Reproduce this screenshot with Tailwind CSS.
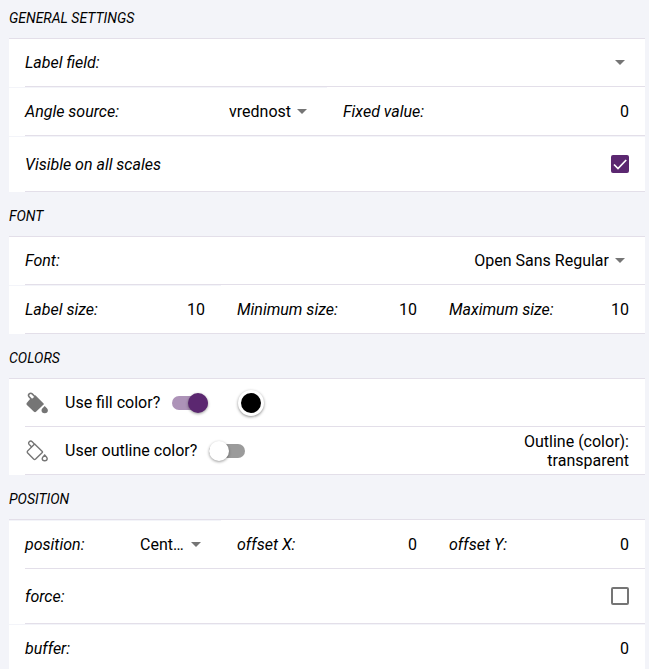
<!DOCTYPE html>
<html lang="en">
<head>
<meta charset="utf-8">
<meta name="viewport" content="width=device-width, initial-scale=1">
<title>Label settings</title>
<script src="https://cdn.jsdelivr.net/npm/@tailwindcss/browser@4"></script>
</head>
<body class="bg-[#f3f4f9] font-[Roboto,sans-serif] text-base leading-5 text-black">
<main class="flex flex-col gap-1.5 pl-[9px] pr-1">

  <section>
    <h2 class="pt-2 pb-2.5 text-sm leading-5 italic uppercase">General settings</h2>
    <div class="border-t border-[#e3dfe9] bg-white">
      <div class="flex h-12 pl-4">
        <div class="flex flex-1 items-center justify-between border-b border-[#e3dfe9] pr-4">
          <label for="field" class="italic">Label field:</label>
          <span class="flex items-center">
            <select id="field" class="w-40 appearance-none pr-5 text-right outline-none"><option></option></select>
            <svg class="pointer-events-none -ml-3.5 mr-1 h-[5px] w-2.5 fill-[#757575]" viewBox="0 0 10 5"><path d="M0 0h10L5 5z"/></svg>
          </span>
        </div>
      </div>
      <div class="grid h-[49px] grid-cols-2">
        <div class="flex border-t border-[#f3f4f9] pl-4">
          <div class="flex flex-1 items-center justify-between border-b border-[#e3dfe9] pr-4">
            <label for="angle" class="italic">Angle source:</label>
            <span class="flex items-center">
              <select id="angle" class="appearance-none pr-5 text-right outline-none"><option>vrednost</option></select>
              <svg class="pointer-events-none -ml-3.5 mr-1 h-[5px] w-2.5 fill-[#757575]" viewBox="0 0 10 5"><path d="M0 0h10L5 5z"/></svg>
            </span>
          </div>
        </div>
        <div class="flex items-center border-b border-[#e3dfe9] px-4 pt-px">
          <label for="fixed" class="shrink-0 italic">Fixed value:</label>
          <input id="fixed" inputmode="numeric" value="0" class="w-0 flex-1 text-right outline-none">
        </div>
      </div>
      <div class="flex h-14 border-t border-[#f3f4f9] pl-4">
        <div class="flex flex-1 items-center justify-between border-b border-[#e3dfe9] pr-4">
          <label for="visible" class="pt-px italic">Visible on all scales</label>
          <span class="grid size-[18px]">
            <input id="visible" type="checkbox" checked class="peer col-start-1 row-start-1 size-[18px] appearance-none rounded-xs border-2 border-[#757575] checked:border-[#5b2770] checked:bg-[#5b2770]">
            <svg class="pointer-events-none invisible col-start-1 row-start-1 size-[18px] peer-checked:visible" viewBox="0 0 18 18" fill="none" stroke="#fff" stroke-width="1.700"><path d="M3 9.500l4 4L15.200 5"/></svg>
          </span>
        </div>
      </div>
    </div>
  </section>

  <section>
    <h2 class="pt-2 pb-2.5 text-sm leading-5 italic uppercase">Font</h2>
    <div class="border-t border-[#e3dfe9] bg-white">
      <div class="flex h-12 pl-4">
        <div class="flex flex-1 items-center justify-between border-b border-[#e3dfe9] pr-4">
          <label for="font" class="italic">Font:</label>
          <span class="flex items-center">
            <select id="font" class="appearance-none pr-5 text-right outline-none"><option>Open Sans Regular</option></select>
            <svg class="pointer-events-none -ml-3.5 mr-1 h-[5px] w-2.5 fill-[#757575]" viewBox="0 0 10 5"><path d="M0 0h10L5 5z"/></svg>
          </span>
        </div>
      </div>
      <div class="grid h-[49px] grid-cols-3">
        <div class="flex border-t border-[#f3f4f9] pl-4">
          <div class="flex flex-1 items-center border-b border-[#e3dfe9] pr-4">
            <label for="size" class="shrink-0 italic">Label size:</label>
            <input id="size" inputmode="numeric" value="10" class="w-0 flex-1 text-right outline-none">
          </div>
        </div>
        <div class="flex items-center border-b border-[#e3dfe9] px-4 pt-px">
          <label for="min" class="shrink-0 italic">Minimum size:</label>
          <input id="min" inputmode="numeric" value="10" class="w-0 flex-1 text-right outline-none">
        </div>
        <div class="flex items-center border-b border-[#e3dfe9] px-4 pt-px">
          <label for="max" class="shrink-0 italic">Maximum size:</label>
          <input id="max" inputmode="numeric" value="10" class="w-0 flex-1 text-right outline-none">
        </div>
      </div>
    </div>
  </section>

  <section>
    <h2 class="pt-2 pb-2.5 text-sm leading-5 italic uppercase">Colors</h2>
    <div class="border-t border-[#e3dfe9] bg-white">
      <div class="flex h-12 pl-4">
        <div class="flex flex-1 items-center border-b border-[#e3dfe9] pr-4">
          <svg class="mr-4 size-6" viewBox="0 0 24 24" fill="#757575">
            <path d="M10.400 4.300L18.600 12.400Q19.200 13 18.600 13.600L11 20.800Q10 21.700 9 20.800L1.900 14Q1 13 1.700 11.900L5.500 7.500z"/>
            <path d="M7 8.700L4.200 5.900A2 2 0 0 1 7.200 2.900L10.200 6z" fill="#fff" stroke="#757575" stroke-width="1.500"/>
            <path d="M19.700 15C21.400 16.700 22.900 18 22.900 19.300A3.200 2.900 0 0 1 16.500 19.300C16.500 18 18 16.700 19.700 15z"/>
          </svg>
          <label for="fill">Use fill color?</label>
          <span class="ml-3 grid w-9 items-center">
            <input id="fill" type="checkbox" role="switch" checked class="peer col-start-1 row-start-1 h-3.5 w-9 appearance-none rounded-full bg-[#9b9b9b] checked:bg-[#ad93b8]">
            <span class="pointer-events-none col-start-1 row-start-1 size-5 rounded-full bg-white shadow-[0_1px_3px_rgba(0,0,0,0.4)] peer-checked:justify-self-end peer-checked:bg-[#5b2770]"></span>
          </span>
          <button type="button" aria-label="Fill color" class="ml-[30px] size-[26px] rounded-full border-3 border-white bg-black shadow-[0_1px_3px_rgba(0,0,0,0.45)]"></button>
        </div>
      </div>
      <div class="flex h-12 pl-4">
        <div class="flex flex-1 items-center border-b border-[#e3dfe9] pr-4">
          <svg class="mr-4 size-6" viewBox="0 0 24 24" fill="none" stroke="#757575" stroke-width="1.400">
            <path d="M9.600 5L17.300 12.500Q17.800 13 17.300 13.500L10.600 20Q9.600 20.900 8.600 20L2.500 13.700Q1.900 13 2.500 12.100L9.600 5"/>
            <path d="M7 8.200L4.200 5.600A2 2 0 0 1 7.200 2.700L9.800 5.400"/>
            <path d="M19.700 15.900C21 17.200 22.200 18.400 22.200 19.500A2.500 2.300 0 0 1 17.200 19.500C17.200 18.400 18.400 17.200 19.700 15.900z"/>
          </svg>
          <label for="outline">User outline color?</label>
          <span class="ml-3 grid w-9 items-center">
            <input id="outline" type="checkbox" role="switch" class="peer col-start-1 row-start-1 h-3.5 w-9 appearance-none rounded-full bg-[#9b9b9b] checked:bg-[#ad93b8]">
            <span class="pointer-events-none col-start-1 row-start-1 size-5 rounded-full bg-white shadow-[0_1px_3px_rgba(0,0,0,0.4)] peer-checked:justify-self-end peer-checked:bg-[#5b2770]"></span>
          </span>
          <p class="ml-auto w-28 text-right leading-[19px]">Outline (color): transparent</p>
        </div>
      </div>
    </div>
  </section>

  <section>
    <h2 class="pt-2 pb-2.5 text-sm leading-5 italic uppercase">Position</h2>
    <div class="border-t border-[#e3dfe9] bg-white">
      <div class="grid h-[49px] grid-cols-3">
        <div class="flex border-t border-[#f3f4f9] pl-4">
          <div class="flex flex-1 items-center justify-between border-b border-[#e3dfe9] pr-4">
            <label for="position" class="italic">position:</label>
            <span class="flex items-center">
              <select id="position" class="w-[65px] appearance-none overflow-hidden pr-5 text-ellipsis whitespace-nowrap outline-none"><option>Center</option></select>
              <svg class="pointer-events-none -ml-3.5 mr-1 h-[5px] w-2.5 fill-[#757575]" viewBox="0 0 10 5"><path d="M0 0h10L5 5z"/></svg>
            </span>
          </div>
        </div>
        <div class="flex items-center border-b border-[#e3dfe9] px-4 pt-px">
          <label for="ox" class="shrink-0 italic">offset X:</label>
          <input id="ox" inputmode="numeric" value="0" class="w-0 flex-1 text-right outline-none">
        </div>
        <div class="flex items-center border-b border-[#e3dfe9] px-4 pt-px">
          <label for="oy" class="shrink-0 italic">offset Y:</label>
          <input id="oy" inputmode="numeric" value="0" class="w-0 flex-1 text-right outline-none">
        </div>
      </div>
      <div class="flex h-[55px] pl-4">
        <div class="flex flex-1 items-center justify-between border-b border-[#e3dfe9] pr-4">
          <label for="force" class="pt-px italic">force:</label>
          <span class="grid size-[18px]">
            <input id="force" type="checkbox" class="peer col-start-1 row-start-1 size-[18px] appearance-none rounded-xs border-2 border-[#757575] checked:border-[#5b2770] checked:bg-[#5b2770]">
            <svg class="pointer-events-none invisible col-start-1 row-start-1 size-[18px] peer-checked:visible" viewBox="0 0 18 18" fill="none" stroke="#fff" stroke-width="1.700"><path d="M3 9.500l4 4L15.200 5"/></svg>
          </span>
        </div>
      </div>
      <div class="flex h-[49px] border-t border-[#f3f4f9] pl-4">
        <div class="flex flex-1 items-center border-b border-[#e3dfe9] pr-4">
          <label for="buffer" class="shrink-0 italic">buffer:</label>
          <input id="buffer" inputmode="numeric" value="0" class="w-0 flex-1 text-right outline-none">
        </div>
      </div>
    </div>
  </section>

</main>
</body>
</html>
